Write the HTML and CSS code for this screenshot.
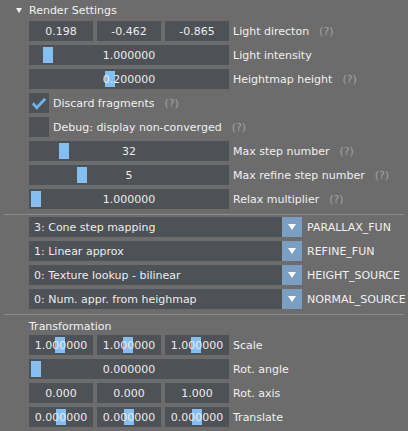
FILE: index.html
```html
<!DOCTYPE html>
<html>
<head>
<meta charset="utf-8">
<link rel="stylesheet" href="styles.css">
</head>
<body>
<div class="panel">
  <div class="title"><span class="tri"></span><span>Render Settings</span></div>

  <div class="row first">
    <div class="val triple">
      <div class="box">0.198</div><div class="box">-0.462</div><div class="box">-0.865</div>
    </div>
    <span class="label">Light directon</span><span class="help">(?)</span>
  </div>

  <div class="row">
    <div class="val box slider"><span class="knob" style="left:14px"></span><span class="num">1.000000</span></div>
    <span class="label">Light intensity</span>
  </div>

  <div class="row">
    <div class="val box slider"><span class="knob" style="left:76px"></span><span class="num">0.200000</span></div>
    <span class="label">Heightmap height</span><span class="help">(?)</span>
  </div>

  <div class="row">
    <div class="check">
      <svg width="20" height="20" viewBox="0 0 20 20"><path d="M3.8 10.2 L7.8 14.6 L16.2 5.8" fill="none" stroke="#6cb4f0" stroke-width="2.8" stroke-linecap="butt" stroke-linejoin="miter"/></svg>
    </div>
    <span class="label">Discard fragments</span><span class="help">(?)</span>
  </div>

  <div class="row">
    <div class="check"></div>
    <span class="label">Debug: display non-converged</span><span class="help">(?)</span>
  </div>

  <div class="row">
    <div class="val box slider"><span class="knob" style="left:30px"></span><span class="num">32</span></div>
    <span class="label">Max step number</span><span class="help">(?)</span>
  </div>

  <div class="row">
    <div class="val box slider"><span class="knob" style="left:48px"></span><span class="num">5</span></div>
    <span class="label">Max refine step number</span><span class="help">(?)</span>
  </div>

  <div class="row">
    <div class="val box slider"><span class="knob" style="left:2px"></span><span class="num">1.000000</span></div>
    <span class="label">Relax multiplier</span><span class="help">(?)</span>
  </div>

  <div class="sep"></div>

  <div class="row first">
    <div class="select box">3: Cone step mapping</div><div class="arrow"></div>
    <span class="label enum">PARALLAX_FUN</span>
  </div>
  <div class="row">
    <div class="select box">1: Linear approx</div><div class="arrow"></div>
    <span class="label enum">REFINE_FUN</span>
  </div>
  <div class="row">
    <div class="select box">0: Texture lookup - bilinear</div><div class="arrow"></div>
    <span class="label enum">HEIGHT_SOURCE</span>
  </div>
  <div class="row">
    <div class="select box">0: Num. appr. from heighmap</div><div class="arrow"></div>
    <span class="label enum">NORMAL_SOURCE</span>
  </div>

  <div class="sep"></div>

  <div class="subtitle">Transformation</div>

  <div class="row first">
    <div class="val triple">
      <div class="box slider"><span class="knob" style="left:26px"></span><span class="num">1.000000</span></div>
      <div class="box slider"><span class="knob" style="left:26px"></span><span class="num">1.000000</span></div>
      <div class="box slider"><span class="knob" style="left:26px"></span><span class="num">1.000000</span></div>
    </div>
    <span class="label">Scale</span>
  </div>

  <div class="row">
    <div class="val box slider"><span class="knob" style="left:2px"></span><span class="num">0.000000</span></div>
    <span class="label">Rot. angle</span>
  </div>

  <div class="row">
    <div class="val triple">
      <div class="box">0.000</div><div class="box">0.000</div><div class="box">1.000</div>
    </div>
    <span class="label">Rot. axis</span>
  </div>

  <div class="row">
    <div class="val triple">
      <div class="box slider"><span class="knob" style="left:27px"></span><span class="num">0.000000</span></div>
      <div class="box slider"><span class="knob" style="left:27px"></span><span class="num">0.000000</span></div>
      <div class="box slider"><span class="knob" style="left:27px"></span><span class="num">0.000000</span></div>
    </div>
    <span class="label">Translate</span>
  </div>
</div>
</body>
</html>
```

FILE: styles.css
```css
html, body {
  margin: 0;
  padding: 0;
}
body {
  width: 408px;
  height: 431px;
  overflow: hidden;
  background: #6c6c6c;
  font-family: "DejaVu Sans", "Verdana", sans-serif;
  font-size: 11px;
  color: #ececec;
}
.panel {
  padding-left: 29px;
}
.title {
  height: 21px;
  display: flex;
  align-items: center;
  margin-left: -13px;
  color: #f2f2f2;
}
.tri {
  width: 0;
  height: 0;
  border-left: 3px solid transparent;
  border-right: 3px solid transparent;
  border-top: 5px solid #f2f2f2;
  margin-right: 7px;
  margin-top: -1px;
}
.subtitle {
  height: 18px;
  display: flex;
  align-items: center;
  color: #f2f2f2;
}
.row {
  display: flex;
  align-items: center;
  height: 20px;
  margin-top: 4px;
}
.row.first {
  margin-top: 0;
}
.val {
  width: 200px;
  flex: none;
}
.box {
  background: #4e5155;
  height: 20px;
  display: flex;
  align-items: center;
  justify-content: center;
  color: #ececec;
}
.triple {
  display: grid;
  grid-template-columns: repeat(3, 64px);
  gap: 4px;
}
.slider {
  position: relative;
}
.knob {
  position: absolute;
  top: 2px;
  bottom: 2px;
  width: 10px;
  background: #84bff2;
}
.num {
  position: relative;
}
.label {
  margin-left: 4px;
  color: #f0f0f0;
  white-space: nowrap;
}
.label.enum {
  margin-left: 5px;
}
.help {
  margin-left: 10px;
  color: #a3a3a3;
}
.check {
  width: 20px;
  height: 20px;
  flex: none;
  background: #4e5155;
}
.check svg {
  display: block;
}
.select {
  width: 248px;
  flex: none;
  justify-content: flex-start;
  padding-left: 5px;
}
.arrow {
  width: 20px;
  height: 20px;
  flex: none;
  background: #7a9fc2;
  display: flex;
  align-items: center;
  justify-content: center;
}
.arrow::after {
  content: "";
  width: 0;
  height: 0;
  border-left: 4px solid transparent;
  border-right: 4px solid transparent;
  border-top: 6px solid #ffffff;
}
.sep {
  height: 1px;
  background: #8c8c8c;
  margin: 5px 4px 2px -25px;
}
```
